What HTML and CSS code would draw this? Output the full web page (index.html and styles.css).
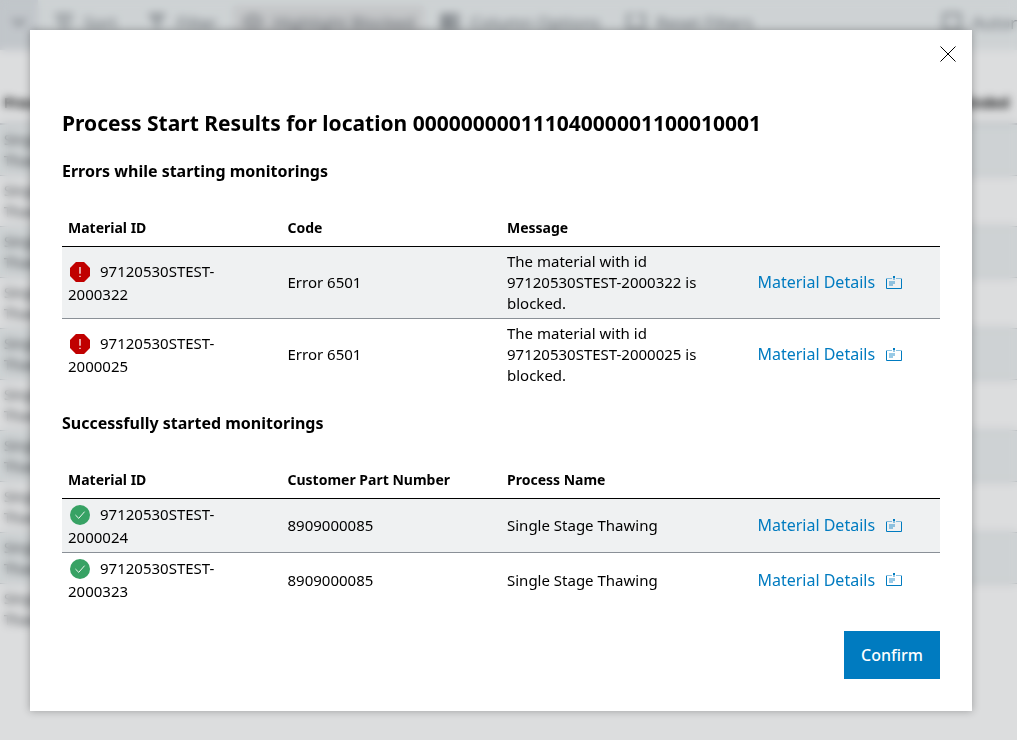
FILE: index.html
```
<!DOCTYPE html>
<html lang="en">
<head>
    <meta charset="utf-8">
    <title>Process Start Results</title>
    <link rel="stylesheet" href="styles.css">
</head>
<body>
    <svg class="symbols" aria-hidden="true">
        <symbol id="icon-error" viewBox="1 1 22 22">
            <path fill="#c00000" d="M7.500 1h9L23 7.500v9L16.500 23h-9L1 16.500v-9z"/>
            <path fill="#fff" d="M11.300 6.500h1.400v7.500h-1.400zM11.300 16h1.400v1.600h-1.400z"/>
        </symbol>
        <symbol id="icon-success" viewBox="0 0 24 24">
            <circle cx="12" cy="12" r="12" fill="#37a264"/>
            <path fill="none" stroke="#fff" stroke-width="1.100" d="M6.500 12l4 4 7-8"/>
        </symbol>
        <symbol id="icon-card" viewBox="0 0 18 14">
            <path fill="none" stroke="currentColor" stroke-opacity=".45" d="M1.500 3V2.500H7M11 2.500h5.500V3"/>
            <path fill="none" stroke="currentColor" d="M1.500 3v9.500h15V3"/>
            <path fill="currentColor" d="M8 0h2v2H8z"/>
            <path fill="currentColor" fill-opacity=".4" d="M8 2h2v2H8zM4 5h6v3H8v2H4z"/>
        </symbol>
    </svg>

    <div class="page">
        <div class="toolbar">
            <div class="toolbar-toggle">
                <svg width="14" height="8" viewBox="0 0 14 8"><path d="M1 1l6 6 6-6"/></svg>
            </div>
            <div class="tool tool-sort">
                <svg width="20" height="20" viewBox="0 0 20 20"><path d="M1 3h18M3 8h5v9M12 8h6M12 13h4M12 17h2"/></svg>
                Sort
            </div>
            <div class="tool">
                <svg width="20" height="20" viewBox="0 0 20 20"><path d="M2 3h16M4 4l6 6 6-6M10 8v10"/></svg>
                Filter
            </div>
            <div class="tool tool-active">
                <svg width="20" height="20" viewBox="0 0 20 20"><path d="M1 10q9-13 18 0-9 13-18 0zM7 10h6"/></svg>
                Highlight Blocked
            </div>
            <div class="tool">
                <svg width="20" height="20" viewBox="0 0 20 20"><path d="M2 3h6v14H2zM5 3v14M11 3h7v5h-7zM11 12h7v5h-7z"/></svg>
                Column Options
            </div>
            <div class="tool">
                <svg width="20" height="20" viewBox="0 0 20 20"><path d="M7 3H2v14h16V8M12 3h6v5"/></svg>
                Reset Filters
            </div>
            <div class="tool tool-auto">
                <svg width="20" height="20" viewBox="0 0 20 20"><path d="M2 2h16v16H2z"/></svg>
                Autorefresh
            </div>
        </div>
        <table class="process-table">
            <thead>
                <tr><th>Process</th><th class="ended">Ended</th></tr>
            </thead>
            <tbody>
                <tr><td>Single Stage<br>Thawing</td><td></td></tr>
                <tr><td>Single Stage<br>Thawing</td><td></td></tr>
                <tr><td>Single Stage<br>Thawing</td><td></td></tr>
                <tr><td>Single Stage<br>Thawing</td><td></td></tr>
                <tr><td>Single Stage<br>Thawing</td><td></td></tr>
                <tr><td>Single Stage<br>Thawing</td><td></td></tr>
                <tr><td>Single Stage<br>Thawing</td><td></td></tr>
                <tr><td>Single Stage<br>Thawing</td><td></td></tr>
                <tr><td>Single Stage<br>Thawing</td><td></td></tr>
                <tr><td>Single Stage<br>Thawing</td><td></td></tr>
            </tbody>
        </table>
    </div>

    <div class="overlay">
        <div class="dialog" role="dialog" aria-modal="true" aria-labelledby="dialog-title">
            <button type="button" class="close" aria-label="Close">
                <svg width="16" height="16" viewBox="0 0 16 16"><path d="M.5.5l15 15M15.500.5l-15 15"/></svg>
            </button>
            <h1 id="dialog-title">Process Start Results for location 00000000011104000001100010001</h1>

            <h2>Errors while starting monitorings</h2>
            <table class="results">
                <thead>
                    <tr><th>Material ID</th><th>Code</th><th>Message</th><th></th></tr>
                </thead>
                <tbody>
                    <tr>
                        <td class="material"><svg class="status"><use href="#icon-error"/></svg>97120530STEST-2000322</td>
                        <td>Error 6501</td>
                        <td>The material with id 97120530STEST-2000322 is blocked.</td>
                        <td class="details"><a href="#">Material Details<svg class="card"><use href="#icon-card"/></svg></a></td>
                    </tr>
                    <tr>
                        <td class="material"><svg class="status"><use href="#icon-error"/></svg>97120530STEST-2000025</td>
                        <td>Error 6501</td>
                        <td>The material with id 97120530STEST-2000025 is blocked.</td>
                        <td class="details"><a href="#">Material Details<svg class="card"><use href="#icon-card"/></svg></a></td>
                    </tr>
                </tbody>
            </table>

            <h2>Successfully started monitorings</h2>
            <table class="results">
                <thead>
                    <tr><th>Material ID</th><th>Customer Part Number</th><th>Process Name</th><th></th></tr>
                </thead>
                <tbody>
                    <tr>
                        <td class="material"><svg class="status"><use href="#icon-success"/></svg>97120530STEST-2000024</td>
                        <td>8909000085</td>
                        <td>Single Stage Thawing</td>
                        <td class="details"><a href="#">Material Details<svg class="card"><use href="#icon-card"/></svg></a></td>
                    </tr>
                    <tr>
                        <td class="material"><svg class="status"><use href="#icon-success"/></svg>97120530STEST-2000323</td>
                        <td>8909000085</td>
                        <td>Single Stage Thawing</td>
                        <td class="details"><a href="#">Material Details<svg class="card"><use href="#icon-card"/></svg></a></td>
                    </tr>
                </tbody>
            </table>

            <div class="actions">
                <button type="button" class="confirm">Confirm</button>
            </div>
        </div>
    </div>
</body>
</html>
```
FILE: styles.css
```
* {
  box-sizing: border-box;
}

body {
  margin: 0;
  background-color: #fff;
  color: #000;
  font: 14px/21px "Noto Sans", sans-serif;
}

.symbols {
  display: none;
}

/* page behind the dialog */
.page {
  position: fixed;
  inset: 0;
  overflow: hidden;
}

.toolbar {
  display: flex;
  height: 50px;
  align-items: center;
  padding-bottom: 6px;
  background-color: #eff3f4;
  color: #71767c;
  font-size: 17px;
  white-space: nowrap;
}

.toolbar svg {
  flex: none;
  fill: none;
  stroke: currentColor;
  stroke-width: 2;
}

.toolbar-toggle {
  display: flex;
  flex: none;
  align-self: flex-start;
  align-items: center;
  justify-content: center;
  width: 38px;
  height: 50px;
  margin-right: 6px;
  padding-bottom: 6px;
  background-color: #e0e4e8;
}

.tool {
  display: flex;
  flex: none;
  align-items: center;
  gap: 10px;
  height: 32px;
  padding: 0 10px;
  margin-right: 6px;
}

.tool-sort {
  margin-right: 10px;
}

.tool-active {
  background-color: #e3e4e5;
}

.tool-auto {
  margin-left: auto;
  margin-right: -60px;
}

.process-table {
  width: 100%;
  border-collapse: collapse;
}

.process-table th {
  height: 74px;
  padding: 32px 4px 0;
  border-bottom: 2px solid #c8cccf;
  text-align: left;
}

.process-table .ended {
  padding-right: 8px;
  text-align: right;
}

.process-table td {
  height: 51px;
  padding: 4px;
  border-bottom: 1px solid #c8cccf;
  color: #43464a;
}

.process-table tbody tr:nth-child(odd) {
  background-color: #eff3f4;
}

.process-table tbody tr:last-child td {
  border-bottom: 0;
}

/* dialog */
.overlay {
  position: fixed;
  inset: 0;
  overflow: auto;
  padding: 30px 45px 29px 30px;
  background-color: rgba(20, 25, 35, .15);
  backdrop-filter: blur(4px);
}

.dialog {
  position: relative;
  padding: 80px 32px 32px;
  background-color: #fff;
  box-shadow: 0 0 8px rgba(0, 0, 0, .3);
}

.close {
  position: absolute;
  top: 8px;
  right: 8px;
  display: flex;
  align-items: center;
  justify-content: center;
  width: 32px;
  height: 32px;
  padding: 0;
  border: 0;
  background: none;
}

.close svg {
  fill: none;
  stroke: #000;
}

h1 {
  margin: 0 0 23px;
  font-size: 21px;
  line-height: 26px;
}

h2 {
  margin: 0 0 33px;
  font-size: 16px;
  line-height: 24px;
}

.results {
  width: 100%;
  margin-bottom: 21px;
  border-collapse: separate;
  border-spacing: 0;
  table-layout: fixed;
}

.results th {
  height: 31px;
  padding: 0 6px 8px;
  border-bottom: 1px solid #000;
  text-align: left;
}

.results td {
  height: 54px;
  padding: 4px 6px;
  font-size: 15px;
  vertical-align: middle;
}

.results tbody tr:nth-child(odd) td {
  border-bottom: 1px solid #8a9097;
  background-color: #eff1f2;
}

.results .material {
  padding-right: 40px;
}

.status {
  width: 20px;
  height: 20px;
  margin: 0 10px 2px 2px;
  vertical-align: -7px;
}

.results .details {
  text-align: center;
}

.details a {
  display: inline-flex;
  align-items: center;
  color: #007bc0;
  font-size: 16px;
  text-decoration: none;
  white-space: nowrap;
}

.card {
  width: 18px;
  height: 14px;
  margin-left: 10px;
}

.actions {
  display: flex;
  justify-content: flex-end;
  margin-top: 24px;
}

.confirm {
  width: 96px;
  height: 48px;
  padding: 0;
  border: 0;
  background-color: #007bc0;
  color: #fff;
  font: 500 16px/24px "Noto Sans", sans-serif;
}
```
